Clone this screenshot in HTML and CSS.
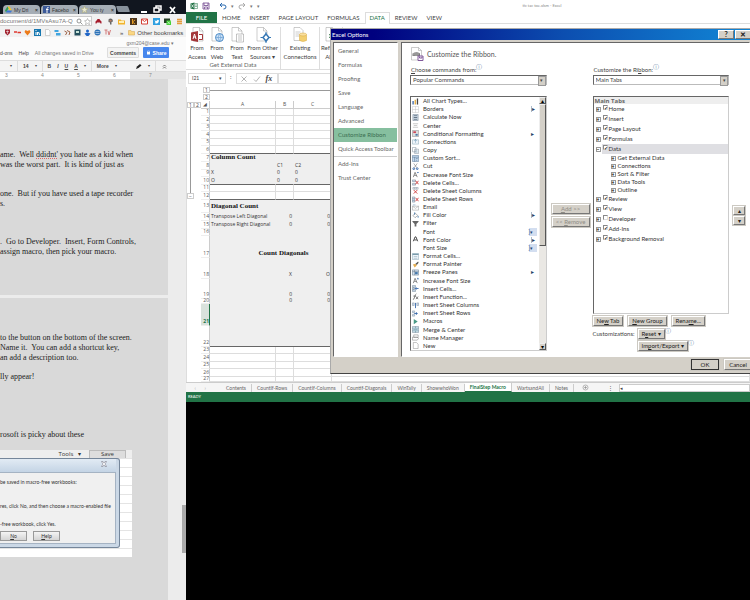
FILE: index.html
```html
<!DOCTYPE html>
<html lang="en">
<head>
<meta charset="utf-8">
<title>Excel Options</title>
<link rel="stylesheet" href="styles.css">
</head>
<body>
<div class="desktop">
<section class="browser">
  <div class="tabstrip">
    <div class="btab"><svg class="i7" viewBox="0 0 14 14"><path d="M5 1h4l5 8H9z" fill="#f5c52c"/><path d="M5 1L0 9l2 4 5-8z" fill="#2c9f57"/><path d="M4 9h10l-2 4H2z" fill="#3d77d8"/></svg><span>My Dri</span><b>×</b></div>
    <div class="btab"><svg class="i7" viewBox="0 0 14 14"><path d="M0 0h14v14H0z" fill="#3b5998"/><path d="M8 14V5q0-2 3-2M6 7h5" stroke="#fff" stroke-width="2" fill="none"/></svg><span>Facebo</span><b>×</b></div>
    <div class="btab"><svg class="i7" viewBox="0 0 14 14"><path d="M7 0l2 5 5 0-4 4 1 5-4-3-4 3 1-5-4-4h5z" fill="#e9e9d2" stroke="#aaa66c"/></svg><span>You ty</span><b>×</b></div>
    <div class="newtab"></div>
    <svg class="winctl" viewBox="0 0 46 14"><path d="M1 12h6" stroke="#fff" stroke-width="2"/><path d="M14 8h5v4h-5zM16 8V6h5v4h-2" stroke="#fff" fill="none" stroke-width="1.5"/><path d="M30 7l5 6M35 7l-5 6" stroke="#fff" stroke-width="1.8"/></svg>
  </div>
  <div class="urlbar">
    <div class="url"><span>document/d/1MVsAsu7A-Q</span>
      <svg class="i7" viewBox="0 0 14 14" fill="none" stroke="#777" stroke-width="1.5"><circle cx="6" cy="6" r="4"/><path d="M9 9l4 4"/></svg>
      <svg class="i7" viewBox="0 0 14 14" fill="none" stroke="#888"><path d="M7 1l2 4 4 .5-3 3 1 5-4-2.500-4 2.500 1-5-3-3L5 5z"/></svg></div>
    <div class="exts">
      <svg class="i7" viewBox="0 0 14 14"><path d="M1 7l3-3 1-2h4l1 2 3 3v4h-2l-1-2H4l-1 2H1z" fill="#a51c2c"/></svg>
      <svg class="i7" viewBox="0 0 14 14"><path d="M3 3q4-4 8 0l1 4-3 1v5H6V9L3 8z" fill="#666"/><path d="M5 4h4v3H5z" fill="#ba7b60"/></svg>
      <svg class="i7" viewBox="0 0 14 14"><path d="M0 3h5l2 2h7v8H0z" fill="#f2b32d"/><path d="M2 6h10v4H2z" fill="#fff0b6"/></svg>
      <svg class="i7" viewBox="0 0 14 14"><path d="M0 0h14v14H0z" fill="#4b351d"/><path d="M5 2v10M10 4L5 8l5 4" stroke="#e39b25" stroke-width="2" fill="none"/></svg>
      <svg class="i7" viewBox="0 0 14 14"><path d="M1 2h12v10H1z" fill="#fff" stroke="#d43f34" stroke-width="2"/><path d="M2 3l5 4 5-4" stroke="#d43f34" fill="none" stroke-width="2"/></svg>
      <svg class="i7" viewBox="0 0 14 14"><path d="M0 0h14v14H0z" fill="#2e9fe0"/><path d="M3 4q3 3 5 1 1-3 4 0-1 7-6 6l-3-1 2-1z" fill="#fff"/></svg>
      <svg class="i7" viewBox="0 0 14 14"><path d="M0 1h12v9H0z" fill="#263f26"/><path d="M5 5h9v9H5z" fill="#45d238"/><path d="M7 7l5 5M12 7l-5 5" stroke="#fff"/></svg>
      <svg class="i7" viewBox="0 0 14 14"><path d="M2 3h10M2 7h10M2 11h10" stroke="#e69b3d" stroke-width="3"/></svg>
    </div>
  </div>
  <div class="bookmarks">
    <svg class="i7" viewBox="0 0 14 14"><path d="M2 1h10v7l-5 5-5-5z" fill="#a32633"/><path d="M7 3v7M4 5h6" stroke="#fff"/></svg>
    <svg class="i7" viewBox="0 0 14 14"><path d="M0 6h6M7 7h7" stroke="#df3830" stroke-width="3"/></svg>
    <svg class="i7" viewBox="0 0 14 14"><path d="M7 13L1 6l2-4 4 2 4-2 2 4z" fill="#ec7b19"/></svg>
    <svg class="i7" viewBox="0 0 14 14"><path d="M0 0h14v14H0z" fill="#1777b0"/><path d="M4 6v6M4 2v2M7 12V6M7 8q4-4 4 4" stroke="#fff" stroke-width="2" fill="none"/></svg>
    <svg class="i7" viewBox="0 0 14 14"><path d="M3 1h6l3 3v9H3z" fill="#fff" stroke="#aaa"/></svg>
    <svg class="i7" viewBox="0 0 14 14"><path d="M1 2h8v4H1zM4 8h9v5H4z" fill="#41a5df"/></svg>
    <svg class="i7" viewBox="0 0 14 14"><path d="M1 4l5 3-3 5M6 3l6 3-2 6" stroke="#9d6145" fill="none" stroke-width="2"/></svg>
    <svg class="i7" viewBox="0 0 14 14"><path d="M1 1h12v12H1z" fill="#244e5c"/><path d="M4 4h6v4H4z" fill="#c7e2d7"/></svg>
    <svg class="i7" viewBox="0 0 14 14"><circle cx="7" cy="4" r="3" fill="#1f65c7"/><path d="M1 9l6-2 6 2-4 5H5z" fill="#1f65c7"/></svg>
    <svg class="i7" viewBox="0 0 14 14"><circle cx="7" cy="7" r="6" fill="#2d72b7"/><path d="M3 5h8M3 9h8" stroke="#fff"/></svg>
    <svg class="i7" viewBox="0 0 14 14"><path d="M1 2h6M4 2v9M8 4l2 8 3-10" stroke="#d27979" fill="none" stroke-width="2"/></svg>
    <span class="chev">»</span>
    <svg class="i7" viewBox="0 0 14 14"><path d="M1 3h5l1 2h6v7H1z" fill="#fbd783" stroke="#d2a04b"/></svg>
    <span class="other">Other bookmarks</span>
  </div>
  <div class="dochead">
    <div class="mail">gxm204@case.edu ▾</div>
    <div class="docrow"><span>d-ons</span><span>Help</span><span class="saved">All changes saved in Drive</span><button class="comments">Comments</button><button class="share"><svg viewBox="0 0 10 10"><path d="M2 4h6v5H2z" fill="#fff"/><path d="M3 4V2h4v2" fill="none" stroke="#fff"/></svg>Share</button></div>
  </div>
  <div class="doctools"><span>▾</span><i></i><b>14</b><span>▾</span><i></i><b>B</b><b><em>I</em></b><b><u>U</u></b><b><u>A</u></b><span>▾</span><i></i><b>More</b><span>▾</span><svg class="i7 pen" viewBox="0 0 14 14"><path d="M2 12l2-5 6-5 3 3-6 5z" fill="#222"/></svg><span>▾</span><i></i><svg class="i7" viewBox="0 0 14 14"><path d="M4 7l3-3 3 3M4 11l3-3 3 3" fill="none" stroke="#555" stroke-width="1.500"/></svg></div>
  <div class="ruler"><span>3</span><span>4</span><span>5</span><span>6</span><span>7</span></div>
  <div class="docarea">
    <article class="page first">
      <p>ame.&nbsp; Well <span class="typo">ddidnt'</span> you hate as a kid when<br>was the worst part.&nbsp; It is kind of just as</p>
      <p>one.&nbsp; But if you have used a tape recorder<br>s.</p>
      <p class="wide">.&nbsp; Go to Developer.&nbsp; Insert, Form Controls,<br>assign macro, then pick your macro.</p>
    </article>
    <article class="page second">
      <p>to the button on the bottom of the screen.<br>Name it.&nbsp; You can add a shortcut key,<br>an add a description too.</p>
      <p>lly appear!</p>
      <p class="last">rosoft is picky about these</p>
      <div class="shot">
        <div class="shotbar"><span>Tools &nbsp; ▾</span><span class="save">Save</span></div>
        <div class="msg">
          <div class="msgtop"><svg class="i8" viewBox="0 0 16 16"><path d="M3 3h3l2 3 2-3h3l-3 5 3 5h-3l-2-3-2 3H3l3-5z" fill="#fff" stroke="#667"/></svg></div>
          <div class="msgbody">
            <p>be saved in macro-free workbooks:</p>
            <p>res, click No, and then choose a macro-enabled file</p>
            <p>-free workbook, click Yes.</p>
            <div class="msgbtns"><button><u>N</u>o</button><button><u>H</u>elp</button></div>
          </div>
        </div>
      </div>
    </article>
    <div class="thumb"></div>
  </div>
</section>

<main class="side">
<section class="excel">
  <header class="xtitle">
    <svg class="i8" viewBox="0 0 16 16"><path d="M1 3l8-2v14l-8-2z" fill="#217346"/><path d="M3 5l4 6M7 5l-4 6" stroke="#fff" stroke-width="1.500"/><path d="M9 3h6v10H9M10 6h4M10 9h4" stroke="#217346" fill="none"/></svg>
    <svg class="i8" viewBox="0 0 16 16"><path d="M2 2h12v12H2zM4 2v5h8V2M5 14v-4h6v4" stroke="#80599a" fill="none" stroke-width="1.800"/></svg>
    <svg class="i8 gap" viewBox="0 0 16 16"><path d="M6 2L2 6l4 4M2 6h8q4 0 4 4t-5 4" stroke="#2b6bb0" fill="none" stroke-width="2"/></svg>
    <small>▾</small>
    <svg class="i8" viewBox="0 0 16 16"><path d="M10 2l4 4-4 4M14 6H6q-4 0-4 4t5 4" stroke="#aaa" fill="none" stroke-width="2"/></svg>
    <small>▾</small><small>▾</small>
    <h1>tic tac toe.xlsm - Excel</h1>
  </header>
  <nav class="rtabs"><a class="file" href="#">FILE</a><a href="#">HOME</a><a href="#">INSERT</a><a href="#">PAGE LAYOUT</a><a href="#">FORMULAS</a><a class="on" href="#">DATA</a><a href="#">REVIEW</a><a href="#">VIEW</a></nav>
  <div class="ribbon">
    <div class="group">
      <div class="tools">
        <button class="tool"><svg viewBox="0 0 32 32"><path d="M8 1h13l7 7v20H8z" fill="#fff" stroke="#999"/><path d="M21 1v7h7" fill="none" stroke="#999"/><path d="M4 11l14-3v22L4 27z" fill="#a4373a"/><path d="M8 24l3-10 3 10M9 20h5" stroke="#fff" stroke-width="2" fill="none"/><path d="M20 15h7v10h-7" fill="none" stroke="#a4373a" stroke-width="2"/></svg>From<br>Access</button>
        <button class="tool"><svg viewBox="0 0 32 32"><path d="M6 1h13l7 7v20H6z" fill="#fff" stroke="#999"/><path d="M19 1v7h7" fill="none" stroke="#999"/><circle cx="21" cy="21" r="8" fill="#cfe2f6" stroke="#4d8dc9" stroke-width="2"/><path d="M13 21h16M21 13q-6 8 0 16q6-8 0-16" stroke="#4d8dc9" fill="none"/></svg>From<br>Web</button>
        <button class="tool"><svg viewBox="0 0 32 32"><path d="M6 1h13l7 7v20H6z" fill="#fff" stroke="#999"/><path d="M19 1v7h7" fill="none" stroke="#999"/><path d="M15 14h14v16H15z" fill="#fff" stroke="#888"/><path d="M18 18h8M18 22h8M18 26h8" stroke="#888"/></svg>From<br>Text</button>
        <button class="tool other"><svg viewBox="0 0 32 32"><path d="M4 1h13l7 7v20H4z" fill="#fff" stroke="#999"/><path d="M17 1v7h7" fill="none" stroke="#999"/><path d="M22 14l6 7-6 7-6-7z" fill="#fff" stroke="#3778b5" stroke-width="3"/><path d="M22 10v6M22 26v6M11 21h6M27 21h5" stroke="#3778b5" stroke-width="2"/></svg>From Other<br>Sources ▾</button>
      </div>
      <div class="glabel">Get External Data</div>
    </div>
    <div class="group">
      <button class="tool exist"><svg viewBox="0 0 32 32"><path d="M4 1h12l6 6v20H4z" fill="#fff" stroke="#999"/><path d="M7 10h10M7 14h8M7 18h8" stroke="#999"/><path d="M15 15v12q7 4 14 0V15" fill="#f3cf70" stroke="#d7a739"/><ellipse cx="22" cy="15" rx="7" ry="3" fill="#f9dfa0" stroke="#d7a739"/></svg>Existing<br>Connections</button>
    </div>
    <div class="group"><button class="tool"><svg viewBox="0 0 32 32"><path d="M6 1h13l7 7v20H6z" fill="#fff" stroke="#999"/><path d="M12 16q5-6 10 0M22 20q-5 6-10 0" stroke="#397b49" stroke-width="2" fill="none"/></svg>Refresh<br>All ▾</button></div>
  </div>
  <div class="fbar">
    <div class="namebox"><span>I21</span><span>▾</span></div><span class="dots">:</span>
    <div class="fx"><svg class="i8" viewBox="0 0 16 16"><path d="M3 3l10 10M13 3L3 13" stroke="#999" stroke-width="1.500"/></svg><svg class="i8" viewBox="0 0 16 16"><path d="M2 9l4 4 8-10" stroke="#999" fill="none" stroke-width="1.500"/></svg><em>fx</em></div>
    <input class="formula" aria-label="Formula">
  </div>
  <div class="sheet">
    <div class="outline"><div class="lv"><span>1</span><span>2</span></div><div class="bracket"></div><span class="minus">−</span></div>
    <div class="cells">
      <div class="collv"><span>1</span><span>2</span></div>
      <table>
        <colgroup><col class="cn"><col class="ca"><col class="cb"><col class="cc"><col></colgroup>
        <thead><tr class="h8"><th>◢</th><th>A</th><th>B</th><th>C</th><th></th></tr></thead>
        <tbody>
          <tr class="h7"><th>1</th><td></td><td></td><td></td><td></td></tr>
          <tr class="h8"><th>2</th><td></td><td></td><td></td><td></td></tr>
          <tr class="h7"><th>3</th><td></td><td></td><td></td><td></td></tr>
          <tr class="h8"><th>4</th><td></td><td></td><td></td><td></td></tr>
          <tr class="h7"><th>5</th><td></td><td></td><td></td><td></td></tr>
          <tr class="h8 rule"><th>6</th><td></td><td></td><td></td><td></td></tr>
          <tr class="h8 g"><th>7</th><td class="head" colspan="4">Column Count</td></tr>
          <tr class="h8 g"><th>8</th><td></td><td>C1</td><td>C2</td><td></td></tr>
          <tr class="h7 g"><th>9</th><td>X</td><td>0</td><td>0</td><td></td></tr>
          <tr class="h8 g rule"><th>10</th><td>O</td><td>0</td><td>0</td><td></td></tr>
          <tr class="h7"><th>11</th><td></td><td></td><td></td><td></td></tr>
          <tr class="h8 rule"><th>12</th><td></td><td></td><td></td><td></td></tr>
          <tr class="h13 g vcenter"><th>13</th><td class="head" colspan="4">Diagonal Count</td></tr>
          <tr class="h8 g"><th>14</th><td>Transpose Left Diagonal</td><td class="r">0</td><td class="r">0</td><td></td></tr>
          <tr class="h8 g"><th>15</th><td>Transpose Right Diagonal</td><td class="r">0</td><td class="r">0</td><td></td></tr>
          <tr class="h7 g"><th>16</th><td colspan="4"></td></tr>
          <tr class="h22 g"><th>17</th><td class="head c" colspan="3">Count Diagonals</td><td></td></tr>
          <tr class="h21 g"><th>18</th><td></td><td class="r">X</td><td class="r">O</td><td></td></tr>
          <tr class="h20 g"><th>19</th><td></td><td class="r">0</td><td class="r">0</td><td></td></tr>
          <tr class="h5 g"><th>20</th><td></td><td class="r">0</td><td class="r">0</td><td></td></tr>
          <tr class="h22 g"><th class="cur">21</th><td colspan="4"></td></tr>
          <tr class="h21 g rule"><th>22</th><td colspan="4"></td></tr>
          <tr class="h7"><th>23</th><td></td><td></td><td></td><td></td></tr>
          <tr class="h8"><th>24</th><td></td><td></td><td></td><td></td></tr>
          <tr class="h7"><th>25</th><td></td><td></td><td></td><td></td></tr>
          <tr class="h8"><th>26</th><td></td><td></td><td></td><td></td></tr>
          <tr class="h5"><th>27</th><td></td><td></td><td></td><td></td></tr>
        </tbody>
      </table>
    </div>
  </div>
  <nav class="stabs"><span class="arrows">‹</span><span class="arrows">›</span><a href="#">Contents</a><a href="#">CountIf-Rows</a><a href="#">CountIf-Columns</a><a href="#">Countif-Diagonals</a><a href="#">WinTally</a><a href="#">ShowwhoWon</a><a class="on" href="#">FinalStep Macro</a><a href="#">WartsandAll</a><a href="#">Notes</a><svg class="i7 plus" viewBox="0 0 14 14"><circle cx="7" cy="7" r="5" fill="none" stroke="#777"/><path d="M7 4v6M4 7h6" stroke="#777"/></svg><span class="grip">⋮</span><span class="hscroll">◂</span></nav>
  <footer class="status">READY</footer>

  <div class="dialog" role="dialog" aria-label="Excel Options">
    <div class="dtitle"><h2>Excel Options</h2><button>?</button><button>✕</button></div>
    <div class="dmain">
      <nav class="dnav"><a href="#">General</a><a href="#">Formulas</a><a href="#">Proofing</a><a href="#">Save</a><a href="#">Language</a><a href="#">Advanced</a><a class="on" href="#">Customize Ribbon</a><a href="#">Quick Access Toolbar</a><hr><a href="#">Add-Ins</a><a href="#">Trust Center</a></nav>
      <div class="dpane">
        <div class="ptitle"><svg viewBox="0 0 28 28"><path d="M3 1h14l6 6v19H3z" fill="#fff" stroke="#999"/><path d="M17 1v6h6" fill="none" stroke="#999"/><path d="M5 13q8-6 15 0v5H5z" fill="#777"/><path d="M8 11v6M12 10v8M16 11v6" stroke="#fff"/><path d="M16 18h10v9H16z" fill="#fff" stroke="#80599a" stroke-width="2"/><path d="M19 19v3h5v-3" stroke="#80599a" fill="none" stroke-width="2"/></svg><h3>Customize the Ribbon.</h3></div>
        <div class="cols">
          <div class="col">
            <label for="src"><u>C</u>hoose commands from:<sup>ⓘ</sup></label>
            <span class="sel"><select id="src"><option>Popular Commands</option></select></span>
            <div class="listbox">
              <ul class="cmds">
                <li><svg viewBox="0 0 16 16"><path d="M1 7h3v8H1z" fill="#3b69aa"/><path d="M6 4h3v11H6z" fill="#e5ac3e"/><path d="M11 1h3v14h-3z" fill="#444"/></svg>All Chart Types...</li>
                <li class="split"><svg viewBox="0 0 16 16"><path d="M1 1h14v14H1zM8 1v14M1 8h14" stroke="#bbb" fill="none"/></svg>Borders<i>▸</i></li>
                <li><svg viewBox="0 0 16 16"><path d="M2 1h12v14H2z" fill="#dce8f2" stroke="#567"/><path d="M4 4h8M4 8h8M4 12h8" stroke="#567" stroke-width="2"/></svg>Calculate Now</li>
                <li><svg viewBox="0 0 16 16"><path d="M2 4h12M4 8h8M2 12h12" stroke="#888"/></svg>Center</li>
                <li><svg viewBox="0 0 16 16"><path d="M1 1h14v14H1z" fill="#ddd" stroke="#777"/><path d="M3 3h6v4H3z" fill="#c45"/><path d="M8 9h5v4H8z" fill="#47a"/></svg>Conditional Formatting<i>▸</i></li>
                <li><svg viewBox="0 0 16 16"><path d="M1 4h14v10H1z" fill="#eef4fa" stroke="#79a"/><path d="M8 2v9M5 7l3-4 3 4" stroke="#58a" fill="none"/></svg>Connections</li>
                <li><svg viewBox="0 0 16 16"><path d="M1 1h8v10H1zM6 5h9v10H6z" fill="#fff" stroke="#678"/><path d="M8 9h5M8 12h5" stroke="#58a"/></svg>Copy</li>
                <li><svg viewBox="0 0 16 16"><path d="M1 1h14v14H1z" fill="#c7dcf0" stroke="#468"/><path d="M1 5h14M6 5v10M9 8h4M9 12h3" stroke="#357"/></svg>Custom Sort...</li>
                <li><svg viewBox="0 0 16 16"><path d="M4 1l7 10M12 1L5 11" stroke="#555"/><path d="M2 13a2 2 0 114 0 2 2 0 01-4 0M10 13a2 2 0 114 0 2 2 0 01-4 0" fill="none" stroke="#36a" stroke-width="2"/></svg>Cut</li>
                <li><svg viewBox="0 0 16 16"><path d="M3 14L7 3l5 11M5 10h5" stroke="#555" fill="none" stroke-width="1.500"/><path d="M11 2h5l-2.500 3z" fill="#36a"/></svg>Decrease Font Size</li>
                <li><svg viewBox="0 0 16 16"><path d="M1 2h7v4H1zM1 10h7v4H1z" fill="#cde" stroke="#678"/><path d="M8 4l7 8M15 4l-7 8" stroke="#c33" stroke-width="2"/></svg>Delete Cells...</li>
                <li><svg viewBox="0 0 16 16"><path d="M2 1h12v4H2zM6 1v4M10 1v4" fill="#eee" stroke="#789"/><path d="M4 7l8 8M12 7l-8 8" stroke="#c33" stroke-width="2"/></svg>Delete Sheet Columns</li>
                <li><svg viewBox="0 0 16 16"><path d="M1 2h5v12H1zM1 6h5M1 10h5" fill="#cde" stroke="#678"/><path d="M8 4l7 8M15 4l-7 8" stroke="#c33" stroke-width="2"/></svg>Delete Sheet Rows</li>
                <li><svg viewBox="0 0 16 16"><path d="M1 5h14v9H1zM1 5l7 5 7-5" fill="#fff" stroke="#888"/><path d="M2 2h6" stroke="#47a"/></svg>Email</li>
                <li class="split"><svg viewBox="0 0 16 16"><path d="M8 3l5 5-6 5-5-5z" fill="#fff" stroke="#555"/><path d="M6 1v5M14 9v4" stroke="#47a" stroke-width="2"/></svg>Fill Color<i>▸</i></li>
                <li><svg viewBox="0 0 16 16"><path d="M1 2h14v2L10 9v6H6V9L1 4z" fill="#666"/></svg>Filter</li>
                <li class="box"><svg viewBox="0 0 16 16"></svg>Font<i>]▾</i></li>
                <li class="split"><svg viewBox="0 0 16 16"><path d="M3 12L7 2h2l4 10M5 9h6" stroke="#333" fill="none" stroke-width="2"/></svg>Font Color<i>▸</i></li>
                <li class="box"><svg viewBox="0 0 16 16"></svg>Font Size<i>]▾</i></li>
                <li><svg viewBox="0 0 16 16"><path d="M1 1h14v14H1z" fill="#eef4fa" stroke="#79a"/><path d="M1 3h14" stroke="#79a" stroke-width="3"/><path d="M4 8h8M4 12h8" stroke="#79a"/></svg>Format Cells...</li>
                <li><svg viewBox="0 0 16 16"><path d="M2 8l6-2 3 4-5 5z" fill="#e4ad51"/><path d="M8 6l6-5 1 3-4 5" fill="#555"/></svg>Format Painter</li>
                <li><svg viewBox="0 0 16 16"><path d="M1 2h14v12H1z" fill="#d3e2ef" stroke="#567"/><path d="M1 6h14M6 2v12" stroke="#567"/><path d="M7 7h6v5H7z" fill="#47a"/></svg>Freeze Panes<i>▸</i></li>
                <li><svg viewBox="0 0 16 16"><path d="M3 14L7 3l5 11M5 10h5" stroke="#555" fill="none" stroke-width="1.500"/><path d="M11 5h5l-2.500-4z" fill="#36a"/></svg>Increase Font Size</li>
                <li><svg viewBox="0 0 16 16"><path d="M1 1h7v4H1zM1 11h7v4H1zM1 6h4v4H1z" fill="#cde" stroke="#678"/><path d="M15 8H7M10 5L7 8l3 3" stroke="#36a" fill="none" stroke-width="2"/></svg>Insert Cells...</li>
                <li><svg viewBox="0 0 16 16"><path d="M2 15q3 0 4-6t4-7M3 7h6M9 8l5 6M14 8l-5 6" stroke="#444" fill="none" stroke-width="1.500"/></svg>Insert Function...</li>
                <li><svg viewBox="0 0 16 16"><path d="M1 2h4v6H1zM11 2h4v6h-4z" fill="#cde" stroke="#789"/><path d="M8 2v12" stroke="#36a" stroke-width="2"/></svg>Insert Sheet Columns</li>
                <li><svg viewBox="0 0 16 16"><path d="M1 2h5v4H1zM1 10h5v4H1z" fill="#cde" stroke="#789"/><path d="M5 8h8M10 5v6" stroke="#36a" stroke-width="2"/></svg>Insert Sheet Rows</li>
                <li><svg viewBox="0 0 16 16"><path d="M4 2l9 6-9 6z" fill="#4a9a86"/></svg>Macros</li>
                <li><svg viewBox="0 0 16 16"><path d="M1 1h14v14H1z" fill="#d3e6ef" stroke="#678"/><path d="M1 5h14M1 11h14M3 8h10M8 1v4M8 11v4" stroke="#478"/></svg>Merge &amp; Center</li>
                <li><svg viewBox="0 0 16 16"><path d="M4 2h10v6H4zM1 7h11l3 3-3 4H1z" fill="#fff" stroke="#666"/></svg>Name Manager</li>
                <li><svg viewBox="0 0 16 16"><path d="M3 1h7l4 4v10H3z" fill="#fff" stroke="#777"/></svg>New</li>
              </ul>
              <div class="sbar"><span>▴</span><div></div><span>▾</span></div>
            </div>
          </div>
          <div class="transfer"><button disabled><u>A</u>dd &gt;&gt;</button><button disabled>&lt;&lt; <u>R</u>emove</button></div>
          <div class="col">
            <label for="dst">Customize the Ri<u>b</u>bon:<sup>ⓘ</sup></label>
            <span class="sel"><select id="dst"><option>Main Tabs</option></select></span>
            <div class="tree">
              <h4>Main Tabs</h4>
              <div class="node"><i>+</i><input type="checkbox" id="t1" checked><label for="t1">Home</label></div>
              <div class="node"><i>+</i><input type="checkbox" id="t2" checked><label for="t2">Insert</label></div>
              <div class="node"><i>+</i><input type="checkbox" id="t3" checked><label for="t3">Page Layout</label></div>
              <div class="node"><i>+</i><input type="checkbox" id="t4" checked><label for="t4">Formulas</label></div>
              <div class="node on"><i>−</i><input type="checkbox" id="t5" checked><label for="t5">Data</label></div>
              <div class="sub"><i>+</i>Get External Data</div>
              <div class="sub"><i>+</i>Connections</div>
              <div class="sub"><i>+</i>Sort &amp; Filter</div>
              <div class="sub"><i>+</i>Data Tools</div>
              <div class="sub"><i>+</i>Outline</div>
              <div class="node"><i>+</i><input type="checkbox" id="t6" checked><label for="t6">Review</label></div>
              <div class="node"><i>+</i><input type="checkbox" id="t7" checked><label for="t7">View</label></div>
              <div class="node"><i>+</i><input type="checkbox" id="t8"><label for="t8">Developer</label></div>
              <div class="node"><i>+</i><input type="checkbox" id="t9" checked><label for="t9">Add-Ins</label></div>
              <div class="node"><i>+</i><input type="checkbox" id="t10" checked><label for="t10">Background Removal</label></div>
            </div>
            <div class="brow"><button>Ne<u>w</u> Tab</button><button><u>N</u>ew Group</button><button>Rena<u>m</u>e...</button></div>
            <div class="cust"><span>Customizations:</span><div><button>R<u>e</u>set ▾</button><sup>ⓘ</sup></div><div class="imp"><button>Im<u>p</u>ort/Export ▾</button><sup>ⓘ</sup></div></div>
          </div>
          <div class="updown"><button>▴</button><button>▾</button></div>
        </div>
      </div>
    </div>
    <div class="dfoot"><button class="ok">OK</button><button>Cancel</button></div>
  </div>
</section>
</main>
</div>
</body>
</html>
```
FILE: styles.css
```css
* { box-sizing: border-box; }
body { margin: 0; background: #000; font: 6px/8px Lato, "Open Sans", sans-serif; color: #444; }
h1, h2, h3, h4, p, ul { margin: 0; padding: 0; font-weight: 400; font-size: inherit; }
a { color: inherit; text-decoration: none; }
button, input, select { font: inherit; color: inherit; margin: 0; padding: 0; border: 0; background: none; border-radius: 0; }
button { white-space: nowrap; }
i { font-style: normal; }
svg { display: block; flex: none; }
.i7 { width: 7px; height: 7px; }
.i8 { width: 8px; height: 8px; }
.desktop { display: grid; grid-template-columns: 186px minmax(0, 1fr); min-height: 100vh; }

/* Browser window */
.browser { display: flex; flex-direction: column; overflow: hidden; background: #ececec; font-family: "Liberation Sans", Arial, sans-serif; white-space: nowrap; }
.tabstrip { display: flex; align-items: flex-end; height: 14px; background: #11161f; padding-left: 3px; gap: 1px; }
.btab { display: flex; align-items: center; gap: 2px; width: 37px; height: 9px; padding: 0 2px; background: #a5adb5; border-radius: 4px 4px 0 0; color: #333; font-size: 5px; }
.btab span { flex: 1; }
.newtab { width: 12px; height: 6px; margin-bottom: 2px; background: #87919b; border-radius: 1px; transform: skewX(20deg); }
.winctl { width: 46px; height: 14px; margin-left: auto; }
.urlbar { display: flex; align-items: center; height: 14px; background: #f1f1f1; }
.url { display: flex; align-items: center; gap: 1px; width: 92px; height: 10px; background: #fff; border: 1px solid #ccc; border-left: 0; color: #777; font-size: 6px; }
.url span { flex: 1; }
.exts { display: flex; flex: 1; justify-content: space-between; padding: 0 3px; }
.bookmarks { display: flex; align-items: center; gap: 3px; height: 9px; padding-left: 4px; background: #f1f1f1; }
.chev { margin: 0 2px 0 6px; }
.other { font-size: 6px; color: #444; margin-left: -1px; }
.dochead { height: 23px; background: #fbfbfb; padding-top: 2px; }
.mail { text-align: right; padding-right: 12px; font-size: 5px; color: #777; }
.docrow { display: flex; align-items: center; gap: 6px; height: 11px; font-size: 5px; padding-right: 17px; }
.docrow .saved { color: #777; flex: 1; }
.docrow button { height: 11px; font-weight: 700; border-radius: 1px; }
.comments { width: 32px; background: #f4f4f4; border: 1px solid #ddd; }
.share { display: flex; align-items: center; justify-content: center; gap: 2px; width: 26px; background: #4787ed; color: #fff; }
.share svg { width: 5px; height: 5px; }
.docrow .share { margin-left: -2px; }
.doctools { display: flex; align-items: center; gap: 6px; height: 12px; padding: 0 18px 0 10px; background: #f4f4f4; border-top: 1px solid #ddd; border-bottom: 1px solid #ddd; font-size: 5px; color: #444; }
.doctools i { width: 1px; height: 10px; background: #ddd; margin: 0 -1px; }
.doctools span { font-size: 4px; }
.pen { margin-left: auto; }
.ruler { display: flex; height: 7px; background: linear-gradient(90deg, #fff 70%, #e4e4e4 70%); font-size: 5px; line-height: 7px; color: #888; padding-left: 5px; }
.ruler span { width: 36px; }
.docarea { position: relative; flex: 1; display: flex; flex-direction: column; gap: 3px; }
.page { margin-right: 18px; background: #d9d9d9; font: 8px/10px "Liberation Serif", Georgia, serif; color: #222; }
.page p + p { margin-top: 19px; }
.page p + .wide { margin-top: 28px; }
.first { height: 216px; padding-top: 71px; }
.second { flex: 1; padding-top: 35px; }
.second p + p { margin-top: 9px; }
.second p + .last { margin-top: 48px; }
.typo { text-decoration: underline dotted #d66; }
.thumb { position: absolute; right: 0; bottom: 47px; width: 4px; height: 48px; background: #aaa; }
.shot { width: 132px; height: 107px; margin-top: 10px; background: repeating-linear-gradient(#fff 0 8px, #e4e4e4 8px 9px); font: 5px/6px "Open Sans", sans-serif; color: #333; }
.shotbar { display: flex; justify-content: flex-end; gap: 8px; height: 8px; background: #eee; padding-right: 6px; font-size: 6px; line-height: 9px; }
.save { width: 37px; text-align: center; background: #ddd; border: 1px solid #bbb; border-bottom: 0; line-height: 7px; }
.msg { width: 120px; height: 90px; padding: 0 3px 3px 0; background: #cbd8e6; border: 1px solid #75869a; border-left: 0; border-radius: 0 3px 3px 0; }
.msgtop { display: flex; justify-content: flex-end; height: 13px; padding: 1px 8px 0 0; background: linear-gradient(#e2ebf4, #c4d4e5); }
.msgbody { height: 72px; background: #f0f0f0; border: 1px solid #a5b3c3; border-left: 0; padding-top: 6px; font-family: Lato, sans-serif; }
.msgbody p { font: inherit; }
.msgbody p + p, .second .msgbody p + p { margin-top: 18px; }
.second .msgbody p + p + p { margin-top: 12px; }
.msgbtns { display: flex; gap: 6px; margin-top: 4px; }
.msgbtns button { width: 27px; height: 10px; border: 1px solid #999; background: linear-gradient(#f4f4f4, #d4d4d4); }

/* Spreadsheet window */
.side { min-width: 0; }
.excel { position: relative; overflow: hidden; background: #fff; }
.xtitle { display: flex; align-items: center; gap: 4px; height: 12px; padding-left: 4px; }
.xtitle .gap { margin-left: 5px; }
.xtitle small { font-size: 5px; color: #777; }
.xtitle h1 { flex: 1; text-align: center; padding-left: 70px; font-size: 4px; color: #888; }
.rtabs { display: flex; height: 12px; line-height: 11px; border-bottom: 1px solid #ddd; }
.rtabs a { padding: 0 4px; margin-right: 1px; }
.rtabs .file { width: 31px; text-align: center; background: #217346; color: #fff; }
.rtabs .on { color: #217346; background: #fff; border: 1px solid #ddd; border-bottom: 0; line-height: 9px; height: 12px; }
.ribbon { display: flex; height: 46px; padding-top: 3px; border-bottom: 1px solid #ddd; }
.group { height: 42px; border-right: 1px solid #ddd; padding: 0 1px; }
.tools { display: flex; }
.tool { display: block; width: 20px; text-align: center; line-height: 9px; color: #444; }
.tool svg { width: 16px; height: 16px; margin: 0 auto; }
.tool.other { width: 33px; }
.tool.exist { width: 36px; }
.glabel { text-align: center; color: #666; }
.fbar { display: flex; gap: 4px; height: 17px; padding: 3px 0 3px 2px; }
.namebox { display: flex; justify-content: space-between; width: 38px; border: 1px solid #ddd; padding: 0 3px; font-size: 5px; line-height: 9px; }
.fx { display: flex; align-items: center; gap: 5px; width: 42px; border: 1px solid #ddd; padding: 0 3px; }
.fx em { font: italic 700 8px/9px "Liberation Serif", serif; }
.formula { flex: 1; min-width: 0; border: 1px solid #ddd; margin-left: -4px; }
.sheet { display: flex; height: 295px; overflow: hidden; font-family: "Open Sans", sans-serif; }
.outline { width: 15px; padding-top: 15px; border-left: 1px solid #ddd; display: flex; flex-direction: column; }
.lv { display: flex; }
.lv span, .collv span, .minus { width: 7px; height: 6px; border: 1px solid #ccc; font-size: 5px; line-height: 5px; text-align: center; background: #fff; }
.bracket { width: 3px; height: 85px; margin-left: 3px; border-left: 1px solid #999; }
.cells { flex: 1; min-width: 0; }
.collv { display: grid; height: 14px; margin-left: 2px; background: linear-gradient(#999, #999) 7px 3px / 100% 1px no-repeat; }
table { width: 100%; table-layout: fixed; border-collapse: separate; border-spacing: 0; font-size: 5px; line-height: 7px; }
.cn { width: 9px; } .ca { width: 66px; } .cb { width: 18px; } .cc { width: 38px; }
th { padding: 0 0 2px; font-weight: 400; line-height: 4px; vertical-align: bottom; text-align: right; border-bottom: 1px solid #eee; border-right: 1px solid #ccc; color: #555; }
thead th { text-align: center; border-bottom: 1px solid #ccc; }
td { padding: 0 1px 1px; line-height: 5px; vertical-align: bottom; border-right: 1px solid #ddd; border-bottom: 1px solid #ddd; color: #333; white-space: nowrap; }
.h5 { height: 5px; } .h7 { height: 7px; } .h8 { height: 8px; } .h13 { height: 13px; }
.h20 { height: 20px; } .h21 { height: 21px; } .h22 { height: 22px; }
.h5 th, .h5 td { line-height: 3px; padding-bottom: 1px; }
.g td { background: #efefef; border-color: #efefef; }
.rule td { border-bottom-color: #666; }
.vcenter th, .vcenter td { vertical-align: middle; }
.r { text-align: right; }
td.head { font: 700 7px/6px "Liberation Serif", Georgia, serif; color: #111; }
td.c { text-align: center; padding-left: 27px; }
th.cur { background: #d9e2dc; color: #217346; font-weight: 700; border-right-color: #217346; }
.stabs { display: flex; height: 10px; align-items: center; background: #f5f5f5; border-top: 1px solid #ccc; font-size: 5px; white-space: nowrap; }
.stabs a { padding: 0 5px; border-right: 1px solid #ccc; color: #666; }
.stabs .on { background: #fff; color: #217346; font-weight: 700; border-bottom: 1px solid #217346; }
.arrows { width: 10px; text-align: right; color: #aaa; }
.arrows + a { margin-left: 15px; }
.plus { margin-left: 8px; }
.grip { margin-left: auto; }
.hscroll { width: 131px; height: 8px; line-height: 6px; border: 1px solid #ccc; background: #fff; margin-left: 6px; }
.status { height: 10px; padding-left: 2px; background: #217346; color: #fff; font-size: 4px; line-height: 10px; }

/* Options window */
.dialog { position: absolute; left: 144px; right: -4px; top: 28px; bottom: 28px; display: flex; flex-direction: column; background: #d4d0c8; border: 1px solid #aaa; border-right-color: #444; border-bottom-color: #444; }
.dtitle { display: flex; align-items: center; height: 11px; padding: 0 1px; background: linear-gradient(90deg, #00007f 10%, #0c4eb0 55%, #1187d6 100%); color: #fff; }
.dtitle h2 { flex: 1; font-size: 6px; }
.dialog button { background: #d4d0c8; color: #222; border: 1px solid; border-color: #fff #777 #777 #fff; box-shadow: 0 0 0 1px #ccc9c2; height: 10px; line-height: 8px; padding: 0 3px; }
.dialog .dtitle button { width: 16px; height: 9px; line-height: 7px; margin-right: 1px; font-weight: 700; padding: 0; font-size: 7px; box-shadow: none; }
.dmain { flex: 1; display: flex; gap: 3px; padding: 2px 3px 0 2px; min-height: 0; }
.dnav { width: 65px; padding-top: 1px; background: #fff; border: 1px solid; border-color: #666 #fff #fff #666; white-space: nowrap; }
.dnav a { display: block; height: 14px; line-height: 14px; padding-left: 4px; color: #666; }
.dnav .on { background: #86bf9f; color: #3b6e52; }
.dnav hr { margin: 0; border: 0; border-top: 1px solid #ccc; }
.dpane { flex: 1; min-width: 0; display: flex; flex-direction: column; padding: 3px 0 5px 8px; background: #fff; border: 1px solid; border-color: #666 #fff #fff #666; }
.ptitle { display: flex; align-items: center; gap: 3px; height: 16px; }
.ptitle svg { width: 14px; height: 14px; }
.ptitle h3 { font-size: 7px; color: #555; }
.cols { flex: 1; display: flex; min-height: 0; }
.col { flex: 1; min-width: 0; display: flex; flex-direction: column; }
.col > label { height: 13px; line-height: 16px; padding-left: 1px; }
sup { font-size: 6px; line-height: 0; color: #68a; }
.sel { position: relative; display: block; }
.col .sel select { appearance: none; width: 100%; height: 10px; padding: 0 2px; border: 1px solid; border-color: #666 #bbb #bbb #666; background: #fff; display: block; }
.col .sel::after { content: "▾"; position: absolute; right: 1px; top: 1px; width: 6px; height: 8px; background: #d4d0c8; border: 1px solid #999; line-height: 6px; text-align: center; font-size: 5px; }
.listbox, .tree { margin-top: 11px; border: 1px solid; border-color: #666 #ccc #ccc #666; }
.listbox { flex: 1; display: flex; min-height: 0; }
.cmds { flex: 1; display: grid; grid-auto-rows: 1fr; list-style: none; padding: 0 2px 0 1px; color: #333; }
.cmds li { display: flex; align-items: center; min-height: 0; }
.cmds svg { width: 7px; height: 7px; margin-right: 4px; }
.cmds i { margin-left: auto; width: 6px; color: #246; }
.split i { border-left: 1px solid #abc; line-height: 6px; }
.cmds .box i { width: 8px; line-height: 8px; background: #d3def0; color: #247; font-size: 5px; }
.sbar { width: 7px; display: flex; flex-direction: column; background: #eae8e4; }
.sbar span { height: 7px; line-height: 6px; text-align: center; background: #d4d0c8; border: 1px solid; border-color: #eee #555 #555 #eee; color: #000; }
.sbar div { flex: 0 0 142px; background: #d4d0c8; border: 1px solid; border-color: #eee #555 #555 #eee; }
.sbar span:last-child { margin-top: auto; }
.transfer { width: 46px; padding: 142px 3px 0 5px; display: flex; flex-direction: column; gap: 3px; }
.dialog .transfer button { color: #908d86; padding: 0; }
.tree { height: 219px; color: #333; }
.tree h4 { height: 7px; line-height: 9px; padding-left: 1px; background: #eee; font-family: "Open Sans", sans-serif; font-weight: 700; color: #666; }
.node, .sub { display: flex; align-items: center; }
.node { height: 10px; padding-left: 2px; }
.node.on { background: linear-gradient(90deg, #fff 8px, #dfdfe3 8px); }
.sub { height: 8px; padding-left: 17px; }
.tree i { display: grid; place-items: center; width: 5px; height: 5px; border: 1px solid #999; font-size: 5px; line-height: 3px; font-weight: 700; color: #000; margin-right: 2px; }
.tree input { appearance: none; width: 5px; height: 5px; border: 1px solid #888; border-right-color: #ddd; border-bottom-color: #ddd; margin: 0 1px 3px 0; background: #fff; display: grid; place-items: center; }
.tree input:checked::after { content: "✓"; font-size: 5px; line-height: 4px; font-weight: 700; color: #000; }
.brow { display: flex; gap: 5px; padding-top: 2px; }
.cust { display: grid; grid-template-columns: 45px 1fr; row-gap: 2px; padding-top: 3px; align-items: center; white-space: nowrap; }
.cust .imp { grid-column: 2; }
.updown { width: 20px; padding: 144px 4px 0; display: flex; flex-direction: column; gap: 1px; }
.dialog .updown button { height: 9px; padding: 0; line-height: 7px; }
.dfoot { display: flex; justify-content: flex-end; gap: 5px; padding: 2px 1px 3px; }
.dialog .dfoot button { width: 28px; height: 11px; }
.dialog .dfoot .ok { border-color: #333; }
```
